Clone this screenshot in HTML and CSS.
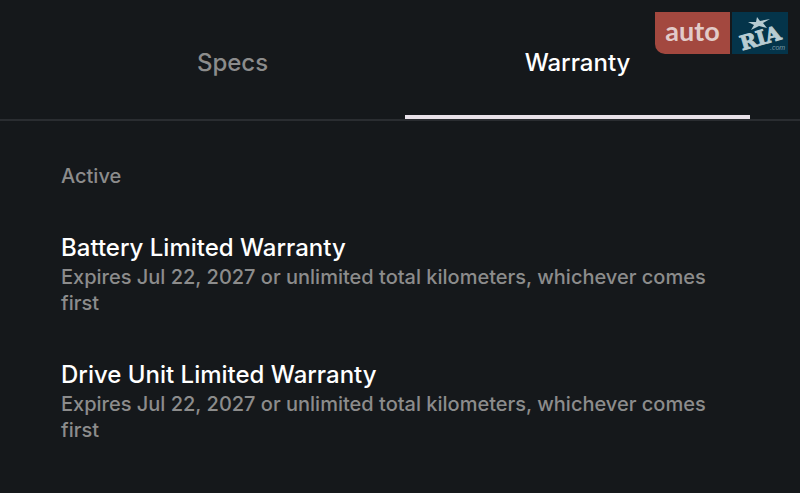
FILE: index.html
```html
<!DOCTYPE html>
<html lang="en">
<head>
<meta charset="utf-8">
<meta name="viewport" content="width=device-width, initial-scale=1">
<title>Warranty</title>
<link rel="stylesheet" href="styles.css">
</head>
<body>
<div class="tabs" role="tablist">
  <button class="tab" role="tab" id="tab-specs" aria-selected="false">Specs</button>
  <button class="tab tab-active" role="tab" id="tab-warranty" aria-selected="true" aria-controls="panel">Warranty</button>
</div>
<main class="panel" id="panel" role="tabpanel" aria-labelledby="tab-warranty">
  <p class="status">Active</p>
  <section class="warranty">
    <h2 class="title">Battery Limited Warranty</h2>
    <p class="detail">Expires Jul 22, 2027 or unlimited total kilometers, whichever comes first</p>
  </section>
  <section class="warranty">
    <h2 class="title">Drive Unit Limited Warranty</h2>
    <p class="detail">Expires Jul 22, 2027 or unlimited total kilometers, whichever comes first</p>
  </section>
</main>
<div class="watermark">
  <span class="mark-auto">auto</span>
  <svg class="mark-ria" viewBox="0 0 56 42" width="56" height="42" role="img">
    <g fill="#b7cbd2">
      <path d="M25 5 L28 9 L38 7 L31 11 L35 16 L27 14 L19 18 L22 13 L16 10 L24 10 Z"/>
      <text class="ria-letters" x="28" y="33" text-anchor="middle" transform="rotate(-16 28 25)">RIA</text>
    </g>
    <text class="ria-com" x="38" y="38">.com</text>
  </svg>
</div>
</body>
</html>
```

FILE: styles.css
```css
* {
  box-sizing: border-box;
}

body {
  margin: 0;
  min-height: 100vh;
  background: #15181b;
  color: #fff;
  font-family: Inter, "Liberation Sans", sans-serif;
  font-weight: 500;
}

h2,
p {
  margin: 0;
}

.tabs {
  display: grid;
  grid-template-columns: 1fr 1fr;
  padding: 6px 50px 0 60px;
  border-bottom: 2px solid #2a2d31;
}

.tab {
  padding: 41px 0 36px;
  border: 0;
  border-bottom: 4px solid transparent;
  background: none;
  color: #8c8c8c;
  font: inherit;
  font-size: 24px;
  line-height: 32px;
  cursor: pointer;
}

.tab-active {
  border-bottom-color: #e8e1e9;
  color: #fff;
}

.panel {
  display: grid;
  gap: 43px;
  padding: 42px 60px 20px 61px;
}

.status,
.detail {
  color: #8c8c8c;
  font-size: 20px;
  line-height: 26px;
}

.title {
  font-size: 24px;
  font-weight: 500;
  line-height: 32px;
}

.watermark {
  position: absolute;
  top: 12px;
  right: 12px;
  display: flex;
  gap: 2px;
}

.mark-auto {
  width: 75px;
  height: 42px;
  border-bottom-left-radius: 10px;
  background: #a3483f;
  color: #e2cbc9;
  font-family: Lato, sans-serif;
  font-size: 27px;
  font-weight: 700;
  line-height: 38px;
  text-align: center;
}

.mark-ria {
  display: block;
  background: #04344a;
}

.ria-letters {
  stroke: #b7cbd2;
  stroke-width: 1px;
  font-family: "DejaVu Serif", serif;
  font-size: 20px;
  font-weight: 700;
}

.ria-com {
  fill: #7d9ba7;
  font-family: "Liberation Sans", sans-serif;
  font-size: 7px;
  font-style: italic;
}
```
